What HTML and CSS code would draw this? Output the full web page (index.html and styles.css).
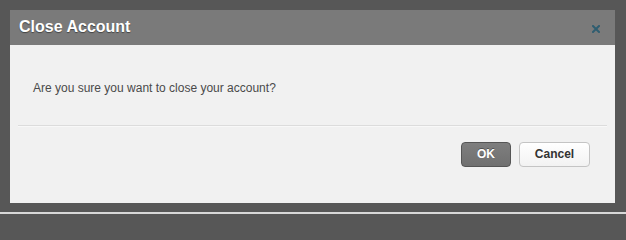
FILE: index.html
```html
<!DOCTYPE html>
<html>
<head>
<meta charset="utf-8">
<link rel="stylesheet" href="styles.css">
</head>
<body>
<div class="screen">
  <div class="dialog">
    <div class="dialog-header">
      <h1 class="dialog-title">Close Account</h1>
      <button class="close-btn" aria-label="Close">
        <svg width="8" height="8" viewBox="0 0 8 8"><path d="M1 1L7 7M7 1L1 7" stroke="#2f5d70" stroke-width="2" stroke-linecap="square"/></svg>
      </button>
    </div>
    <div class="dialog-body">
      <p class="message">Are you sure you want to close your account?</p>
    </div>
    <div class="dialog-footer">
      <button class="btn btn-primary">OK</button>
      <button class="btn btn-default">Cancel</button>
    </div>
  </div>
</div>
<div class="bottom-strip"></div>
</body>
</html>
```

FILE: styles.css
```css
html, body {
  margin: 0;
  padding: 0;
}
body {
  background: #575757;
  font-family: "Liberation Sans", Arial, Helvetica, sans-serif;
  width: 626px;
  height: 214px;
  overflow: hidden;
}
.screen {
  padding: 10px 11px 9px 10px;
  height: 193px;
}
.dialog {
  width: 605px;
  height: 193px;
  background: #f1f1f1;
  display: flex;
  flex-direction: column;
}
.dialog-header {
  height: 35px;
  background: #7a7a7a;
  display: flex;
  align-items: center;
  justify-content: space-between;
  padding: 0 15px 0 9px;
}
.dialog-title {
  margin: 0;
  font-size: 16px;
  font-weight: bold;
  color: #fff;
  text-shadow: 0 1px 1px rgba(0,0,0,0.45);
  line-height: 20px;
  position: relative;
  top: -1px;
}
.close-btn {
  border: 0;
  background: none;
  padding: 0;
  width: 8px;
  height: 8px;
  display: flex;
  position: relative;
  top: 1px;
}
.dialog-body {
  height: 81px;
  margin: 0 8px;
  border-bottom: 1px solid #dcdcdc;
  box-shadow: 0 1px 0 #f8f8f8;
  box-sizing: border-box;
  padding: 35px 0 0 15px;
}
.message {
  margin: 0;
  font-size: 12px;
  line-height: 16px;
  color: #4a4a4a;
}
.dialog-footer {
  display: flex;
  justify-content: flex-end;
  gap: 8px;
  padding: 16px 25px 0 0;
}
.btn {
  height: 25px;
  box-sizing: border-box;
  border-radius: 4px;
  font-family: "Liberation Sans", Arial, sans-serif;
  font-size: 12px;
  font-weight: bold;
  padding: 0;
  line-height: 23px;
}
.btn-primary {
  width: 50px;
  background: linear-gradient(#7e7e7e, #707070);
  border: 1px solid #555;
  color: #fff;
  text-shadow: 0 -1px 0 rgba(0,0,0,0.35);
}
.btn-default {
  width: 71px;
  background: linear-gradient(#ffffff, #f2f2f2);
  border: 1px solid #c4c4c4;
  color: #333;
}
.bottom-strip {
  height: 2px;
  background: #d8d8d8;
}
```
